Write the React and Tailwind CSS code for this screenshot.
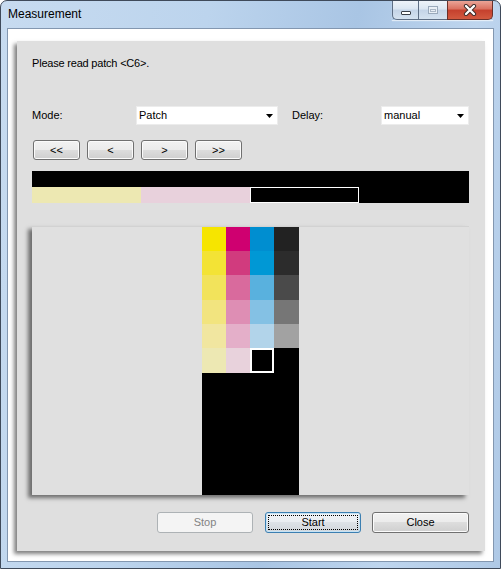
import React from "react";

const patchRows = [
  ["#f6e500", "#cf0070", "#008ed0", "#222222"],
  ["#f3e335", "#d13b7e", "#0098d5", "#2c2c2c"],
  ["#f2e35b", "#d96a9d", "#59b1de", "#4a4a4a"],
  ["#f2e47f", "#de8eb4", "#84c1e4", "#767676"],
  ["#f1e6a0", "#e4afc9", "#b2d4ea", "#a2a2a2"],
  ["#ede8b3", "#e8d2dc", "current", "#000000"],
];
const colWidths = [24, 24, 24, 25];
const rowHeights = [24, 24, 25, 24, 24, 25];

function NavButton({ label }) {
  return (
    <button className="w-[47px] h-[20px] rounded-[3px] border border-[#707070] bg-[linear-gradient(#f2f2f2,#ebebeb_50%,#dddddd_50%,#cfcfcf)] shadow-[inset_0_0_0_1px_#fbfbfb] text-[11px] leading-none text-black">
      {label}
    </button>
  );
}

function Select({ value, width }) {
  return (
    <div className={`${width} h-[19px] bg-white border border-[#ececec] flex items-center justify-between pl-[2px] pr-[4px]`}>
      <span className="text-[11px] leading-none">{value}</span>
      <svg width="7" height="4" viewBox="0 0 7 4">
        <path d="M0 0h7L3.5 4z" fill="#000" />
      </svg>
    </div>
  );
}

function CaptionButtons() {
  return (
    <div className="flex mr-[7px] h-[19px] shadow-[0_1px_1px_rgba(255,255,255,0.6)]">
      <div className="w-[26px] h-full rounded-bl-[5px] border border-r-0 border-t-0 border-[#5e6e84] bg-[linear-gradient(#eef3f9,#dbe6f2_45%,#c4d4e7_50%,#d5e2f0)] flex items-end justify-center pb-[4px]">
        <div className="w-[10px] h-[4px] rounded-[1px] bg-white border border-[#3a3f47]" />
      </div>
      <div className="w-[29px] h-full border border-r-0 border-t-0 border-[#5e6e84] bg-[linear-gradient(#eef3f9,#dbe6f2_45%,#c4d4e7_50%,#d5e2f0)] flex items-center justify-center">
        <div className="w-[10px] h-[8px] border border-[#9aa9bb] bg-[#e9eff6] flex items-center justify-center">
          <div className="w-[6px] h-[3px] border border-[#aab6c5]" />
        </div>
      </div>
      <div className="w-[46px] h-full rounded-br-[5px] border border-t-0 border-[#6b3029] bg-[linear-gradient(#eaa497,#d9705f_45%,#c5402d_50%,#d2593f)] flex items-center justify-center">
        <svg width="14" height="12" viewBox="0 0 14 12">
          <path d="M3 2l8 8M11 2l-8 8" stroke="#3b2a28" strokeWidth="4.2" strokeLinecap="round" />
          <path d="M3 2l8 8M11 2l-8 8" stroke="#ffffff" strokeWidth="2.4" strokeLinecap="round" />
        </svg>
      </div>
    </div>
  );
}

function PatchGrid() {
  return (
    <div className="w-[97px] h-full bg-black">
      {patchRows.map((row, r) => (
        <div key={r} className="flex">
          {row.map((c, i) =>
            c === "current" ? (
              <div
                key={i}
                className="bg-black border-2 border-white"
                style={{ width: colWidths[i], height: rowHeights[r] }}
              />
            ) : (
              <div key={i} style={{ width: colWidths[i], height: rowHeights[r], background: c }} />
            )
          )}
        </div>
      ))}
    </div>
  );
}

export default function App() {
  return (
    <div className="w-[501px] h-[569px] bg-white font-['Liberation_Sans',Arial,sans-serif] text-black">
      <div className="w-full h-full rounded-t-[7px] border border-[#3f4a5a] bg-[linear-gradient(100deg,#c7dbf0_0%,#bcd4ed_35%,#a9c5e4_60%,#bed5ee_80%,#afc9e6_100%)] flex flex-col">
        {/* title bar */}
        <div className="h-[27px] flex items-start justify-between">
          <div className="pl-[7px] pt-[6px] text-[12px] leading-[15px] text-black">Measurement</div>
          <CaptionButtons />
        </div>

        {/* client area */}
        <div className="flex-1 mx-[6px] mb-[6px] border border-[#8397b0] bg-white pt-[12px] pl-[9px] pr-[8px] pb-[10px] flex flex-col">
          <div className="flex-1 bg-[#dfdfdf] shadow-[-3px_3px_4px_rgba(0,0,0,0.5)] px-[15px] pt-[16px] flex flex-col">
            <div className="text-[11px] leading-[13px] tracking-[-0.2px]">Please read patch &lt;C6&gt;.</div>

            {/* mode / delay */}
            <div className="mt-[36px] flex items-center h-[19px]">
              <div className="w-[104px] text-[11px]">Mode:</div>
              <Select value="Patch" width="w-[142px]" />
              <div className="ml-[14px] w-[89px] text-[11px]">Delay:</div>
              <Select value="manual" width="w-[88px]" />
            </div>

            {/* nav buttons */}
            <div className="mt-[15px] ml-[1px] flex gap-[7px]">
              <NavButton label="<<" />
              <NavButton label="<" />
              <NavButton label=">" />
              <NavButton label=">>" />
            </div>

            {/* patch strip */}
            <div className="mt-[11px] w-[437px] bg-black">
              <div className="h-[16px]" />
              <div className="flex h-[16px]">
                <div className="w-[109px] bg-[#ede8b2]" />
                <div className="w-[109px] bg-[#e8d1dc]" />
                <div className="w-[109px] border border-white" />
                <div className="flex-1" />
              </div>
            </div>

            {/* canvas */}
            <div className="mt-[23px] w-[437px] h-[269px] bg-[#e0e0e0] border-t border-[#d2d2d2] shadow-[-4px_3px_4px_rgba(0,0,0,0.5)] flex justify-center">
              <PatchGrid />
            </div>

            {/* bottom buttons */}
            <div className="mt-[17px] flex justify-end pr-[1px]">
              <button className="w-[96px] h-[21px] rounded-[3px] border border-[#adb2b5] bg-[#f4f4f4] text-[11px] text-[#838383]">
                Stop
              </button>
              <button className="ml-[12px] w-[96px] h-[21px] rounded-[3px] border border-[#3c7fb1] bg-[linear-gradient(#f0f3f6,#e9edf1_50%,#dde2e7_50%,#d2d7dc)] shadow-[inset_0_0_0_1px_#c6e3f5] p-[2px]">
                <div className="w-full h-full border border-dotted border-black flex items-center justify-center text-[11px]">
                  Start
                </div>
              </button>
              <button className="ml-[11px] w-[97px] h-[21px] rounded-[3px] border border-[#707070] bg-[linear-gradient(#f2f2f2,#ebebeb_50%,#dddddd_50%,#cfcfcf)] shadow-[inset_0_0_0_1px_#fbfbfb] text-[11px]">
                Close
              </button>
            </div>
          </div>
        </div>
      </div>
    </div>
  );
}
